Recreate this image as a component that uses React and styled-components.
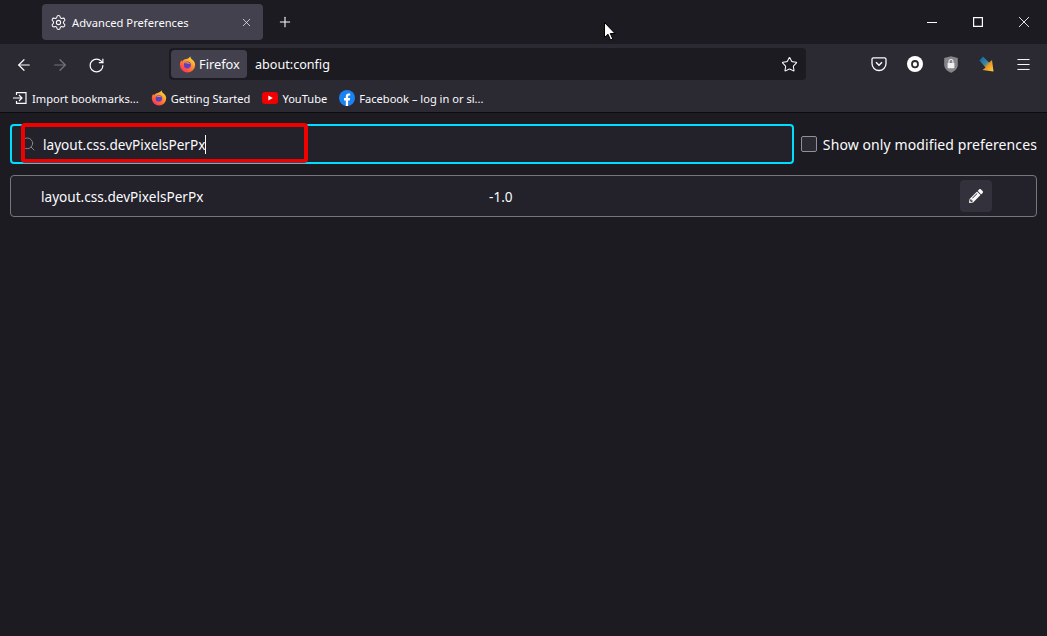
import React from "react";
import styled, { createGlobalStyle } from "styled-components";
import { Settings, X, Plus, ArrowLeft, ArrowRight, RotateCw, Star, Search, Menu } from "lucide-react";
import { FaPencilAlt } from "react-icons/fa";

const GlobalStyle = createGlobalStyle`
  html, body { margin: 0; padding: 0; background: #1c1b22; }
  body { font-family: "Noto Sans", "Open Sans", sans-serif; color: #fbfbfe; overflow: hidden; }
`;

const Page = styled.div`
  position: relative;
  width: 1047px;
  height: 636px;
  background: #1c1b22;
  display: flex;
  flex-direction: column;
`;

// ---- title bar ----
const TabStrip = styled.div`
  height: 44px;
  display: flex;
  align-items: center;
  padding-left: 42px;
  background: #1c1b22;
`;

const Tab = styled.div`
  width: 221px;
  height: 36px;
  box-sizing: border-box;
  padding: 0 10px 0 8px;
  display: flex;
  align-items: center;
  background: #42414d;
  border-radius: 4px;
`;

const TabTitle = styled.span`
  flex: 1;
  margin-left: 5px;
  font-size: 11.2px;
  white-space: nowrap;
`;

const NewTab = styled.div`
  display: flex;
  margin-left: 14px;
`;

const WindowControls = styled.div`
  margin-left: auto;
  display: flex;
`;

const WindowButton = styled.div`
  width: 46px;
  height: 44px;
  display: flex;
  align-items: center;
  justify-content: center;
`;

// ---- nav bar ----
const NavBar = styled.div`
  height: 41px;
  box-sizing: border-box;
  padding: 4px 0 5px 14px;
  display: flex;
  align-items: center;
  background: #2b2a33;
`;

const NavButton = styled.div`
  width: 20px;
  display: flex;
  justify-content: center;
  margin-top: 2px;
  margin-right: 16px;
  color: ${(p) => (p.$dim ? "#75747c" : "#fbfbfe")};
`;

const UrlBar = styled.div`
  width: 637px;
  height: 32px;
  box-sizing: border-box;
  padding: 2px;
  display: flex;
  align-items: center;
  background: #1c1b22;
  border-radius: 4px;
  margin-left: 47px;
`;

const IdentityChip = styled.div`
  width: 76px;
  height: 28px;
  box-sizing: border-box;
  padding-left: 8px;
  display: flex;
  align-items: center;
  gap: 3px;
  background: #42414d;
  border-radius: 4px;
  font-size: 12.8px;
`;

const UrlText = styled.span`
  flex: 1;
  margin-left: 8px;
  padding-top: 1px;
  font-size: 12.6px;
`;

const UrlStar = styled.div`
  display: flex;
  margin-right: 6px;
`;

const NavExtras = styled.div`
  margin-left: 55px;
  display: flex;
  align-items: center;
`;

const ExtraIcon = styled.div`
  width: 36px;
  display: flex;
  justify-content: center;
`;

// ---- bookmarks ----
const BookmarkBar = styled.div`
  height: 28px;
  box-sizing: border-box;
  padding: 0 0 1px 12px;
  display: flex;
  align-items: center;
  background: #2b2a33;
  border-bottom: 1px solid #0c0c0d;
`;

const Bookmark = styled.div`
  display: flex;
  align-items: center;
  gap: 4px;
  margin-right: 12px;
  font-size: 11.1px;
  white-space: nowrap;
`;

// ---- about:config content ----
const Content = styled.div`
  padding: 11px 10px 0;
  display: flex;
  flex-direction: column;
  gap: 11px;
`;

const SearchRow = styled.div`
  display: flex;
  align-items: center;
`;

const SearchBox = styled.div`
  position: relative;
  width: 784px;
  height: 40px;
  box-sizing: border-box;
  padding-left: 8px;
  display: flex;
  align-items: center;
  border: 2px solid #00ddff;
  border-radius: 4px;
  background: #23222b;
`;

const SearchValue = styled.span`
  margin-left: 7px;
  font-size: 13.6px;
  color: #fbfbfe;
`;

const Caret = styled.span`
  width: 1px;
  height: 19px;
  background: #fbfbfe;
`;

const RedMark = styled.div`
  position: absolute;
  left: 9px;
  top: -3px;
  width: 287px;
  height: 40px;
  box-sizing: border-box;
  border: 4px solid #f00000;
  border-radius: 4px;
`;

const ModifiedToggle = styled.label`
  margin-left: 7px;
  display: flex;
  align-items: center;
  gap: 6px;
  font-size: 14px;
  letter-spacing: 0.1px;
  white-space: nowrap;
`;

const CheckBox = styled.span`
  width: 16px;
  height: 16px;
  box-sizing: border-box;
  border: 1px solid #8f8f9d;
  border-radius: 2px;
  background: #2b2a33;
`;

const PrefRow = styled.div`
  height: 42px;
  box-sizing: border-box;
  padding-left: 30px;
  display: flex;
  align-items: center;
  border: 1px solid #77767d;
  border-radius: 4px;
  background: #23222b;
  font-size: 13.6px;
`;

const PrefName = styled.span`
  width: 448px;
`;

const PrefValue = styled.span`
  width: 471px;
`;

const EditButton = styled.div`
  width: 32px;
  height: 32px;
  display: flex;
  align-items: center;
  justify-content: center;
  background: #33323c;
  border-radius: 4px;
`;

const Pointer = styled.svg`
  position: absolute;
  left: 604px;
  top: 22px;
`;

const FirefoxLogo = ({ id, size = 17 }) => (
  <svg width={size} height={size} viewBox="0 0 16 16">
    <defs>
      <linearGradient id={id} x1="0.85" y1="0.05" x2="0.2" y2="0.95">
        <stop offset="0" stopColor="#ffe03a" />
        <stop offset="0.4" stopColor="#ff9a2a" />
        <stop offset="0.75" stopColor="#ff5a3a" />
        <stop offset="1" stopColor="#f0306a" />
      </linearGradient>
    </defs>
    <path d="M10.600 0.300c0 1.700 1 2.400 2.300 3.500 1.300 1.100 2.300 2.700 2.300 4.500a7.200 7.200 0 1 1-14.400 0c0-1.900 0.600-3.400 1.500-4.400l0.700 1.400c0.800-1.500 2.200-2.100 3.600-2.400 1.700-0.300 3.300-1 4-2.600z" fill={`url(#${id})`} />
    <circle cx="7.900" cy="8.500" r="3.300" fill="#5d3fc4" />
    <path d="M5 6.600c1.800-1.300 4.400-1 5.700 0.900-1.300-0.600-3.200-0.300-5.700-0.900z" fill="#ffa03a" />
    <path d="M11.200 8.500a3.300 3.300 0 0 1-3 3.300c1.500-0.800 2.300-1.900 3-3.300z" fill="#e0457a" />
  </svg>
);

const FacebookLogo = () => (
  <svg width="16" height="16" viewBox="0 0 16 16">
    <circle cx="8" cy="8" r="8" fill="#1a82f2" />
    <path d="M6.800 16v-5.600H5V8h1.800V6.400C6.800 4.500 7.900 3.400 9.700 3.400c.7 0 1.500.1 1.500.1v2h-.9c-.9 0-1.200.6-1.200 1.100V8h2l-.3 2.400H9.100V16z" fill="#fff" />
  </svg>
);

const YouTubeLogo = () => (
  <svg width="16" height="12" viewBox="0 0 16 12">
    <rect width="16" height="12" rx="3" fill="#f00000" />
    <path d="M6.300 3.400v5.200L10.800 6z" fill="#fff" />
  </svg>
);

const ImportIcon = () => (
  <svg width="16" height="16" viewBox="0 0 16 16" fill="none" stroke="#fbfbfe" strokeWidth="1.2">
    <path d="M1 8h8.500M7 5l3 3-3 3" />
    <path d="M4.500 5V2.600h9.500v10.800H4.500V11" />
  </svg>
);

const PocketIcon = () => (
  <svg width="16" height="16" viewBox="0 0 16 16" fill="none" stroke="#fbfbfe" strokeWidth="1.3">
    <path d="M2.400 1.800h11.200c.8 0 1.400.6 1.400 1.400v4.300a7 7 0 0 1-14 0V3.200c0-.8.6-1.400 1.400-1.400z" />
    <path d="M5 6.200l3 3 3-3" strokeWidth="1.500" />
  </svg>
);

const OperaBadge = () => (
  <svg width="16" height="16" viewBox="0 0 16 16">
    <circle cx="8" cy="8" r="8" fill="#fff" />
    <ellipse cx="8" cy="8.200" rx="3" ry="3.200" fill="none" stroke="#2b2a33" strokeWidth="1.800" />
  </svg>
);

const ShieldLock = () => (
  <svg width="16" height="17" viewBox="0 0 16 17">
    <path d="M8 0.300l6.800 1.800v6.900c0 3.500-3.500 6.500-6.800 7.700-3.300-1.200-6.800-4.200-6.800-7.700V2.100z" fill="#85858a" />
    <rect x="4.600" y="7" width="6.800" height="5.200" rx="0.600" fill="#f0f0f0" />
    <path d="M6 7V5.500a2 2 0 0 1 4 0V7" fill="none" stroke="#f0f0f0" strokeWidth="1.100" />
  </svg>
);

const ArrowExtension = () => (
  <svg width="16" height="16" viewBox="0 0 16 16">
    <defs>
      <linearGradient id="arw" x1="0" y1="0" x2="1" y2="1">
        <stop offset="0.1" stopColor="#1a6aa8" />
        <stop offset="0.45" stopColor="#3a88a0" />
        <stop offset="0.62" stopColor="#f09a20" />
        <stop offset="1" stopColor="#fbd040" />
      </linearGradient>
    </defs>
    <path d="M4 0.500L10 6.500l3-2.500 1.500 11.500-11-1.500 3-2.500L0.500 4.500z" fill="url(#arw)" />
  </svg>
);

const MinimizeGlyph = () => (
  <svg width="10" height="10" viewBox="0 0 10 10" stroke="#fbfbfe" strokeWidth="1">
    <path d="M0 5.500h10" />
  </svg>
);

const MaximizeGlyph = () => (
  <svg width="10" height="10" viewBox="0 0 10 10" fill="none" stroke="#fbfbfe" strokeWidth="1.200">
    <path d="M0.600 0.600h8.800v8.800H0.600z" />
  </svg>
);

const CloseGlyph = () => (
  <svg width="10" height="10" viewBox="0 0 10 10" stroke="#fbfbfe" strokeWidth="0.900">
    <path d="M0 0l10 10M10 0L0 10" />
  </svg>
);

const bookmarks = [
  { label: "Import bookmarks...", icon: <ImportIcon /> },
  { label: "Getting Started", icon: <FirefoxLogo id="ffb" size={16} /> },
  { label: "YouTube", icon: <YouTubeLogo /> },
  { label: "Facebook – log in or si...", icon: <FacebookLogo /> },
];

const App = () => {
  return (
    <Page>
      <GlobalStyle />
      <TabStrip>
        <Tab>
          <Settings size={17} strokeWidth={1.5} />
          <TabTitle>Advanced Preferences</TabTitle>
          <X size={13} strokeWidth={1.3} />
        </Tab>
        <NewTab>
          <Plus size={16} strokeWidth={1.6} />
        </NewTab>
        <WindowControls>
          <WindowButton>
            <MinimizeGlyph />
          </WindowButton>
          <WindowButton>
            <MaximizeGlyph />
          </WindowButton>
          <WindowButton>
            <CloseGlyph />
          </WindowButton>
        </WindowControls>
      </TabStrip>

      <NavBar>
        <NavButton>
          <ArrowLeft size={18} strokeWidth={1.6} />
        </NavButton>
        <NavButton $dim>
          <ArrowRight size={18} strokeWidth={1.6} />
        </NavButton>
        <NavButton>
          <RotateCw size={17} strokeWidth={1.7} />
        </NavButton>
        <UrlBar>
          <IdentityChip>
            <FirefoxLogo id="ffa" />
            Firefox
          </IdentityChip>
          <UrlText>about:config</UrlText>
          <UrlStar>
            <Star size={17} strokeWidth={1.5} />
          </UrlStar>
        </UrlBar>
        <NavExtras>
          <ExtraIcon>
            <PocketIcon />
          </ExtraIcon>
          <ExtraIcon>
            <OperaBadge />
          </ExtraIcon>
          <ExtraIcon>
            <ShieldLock />
          </ExtraIcon>
          <ExtraIcon>
            <ArrowExtension />
          </ExtraIcon>
          <ExtraIcon>
            <Menu size={17} strokeWidth={1.4} />
          </ExtraIcon>
        </NavExtras>
      </NavBar>

      <BookmarkBar>
        {bookmarks.map((b) => (
          <Bookmark key={b.label}>
            {b.icon}
            {b.label}
          </Bookmark>
        ))}
      </BookmarkBar>

      <Content>
        <SearchRow>
          <SearchBox>
            <Search size={16} strokeWidth={1.5} color="#85848c" />
            <SearchValue>layout.css.devPixelsPerPx</SearchValue>
            <Caret />
            <RedMark />
          </SearchBox>
          <ModifiedToggle>
            <CheckBox />
            Show only modified preferences
          </ModifiedToggle>
        </SearchRow>
        <PrefRow>
          <PrefName>layout.css.devPixelsPerPx</PrefName>
          <PrefValue>-1.0</PrefValue>
          <EditButton>
            <FaPencilAlt size={14} color="#fbfbfe" />
          </EditButton>
        </PrefRow>
      </Content>

      <Pointer width="12" height="19" viewBox="0 0 12 19">
        <path d="M0.500 0.500v15l3.500-3.300 2.500 5.800 2.300-1-2.500-5.500h4.700z" fill="#fff" stroke="#000" strokeWidth="1" />
      </Pointer>
    </Page>
  );
};

export default App;
